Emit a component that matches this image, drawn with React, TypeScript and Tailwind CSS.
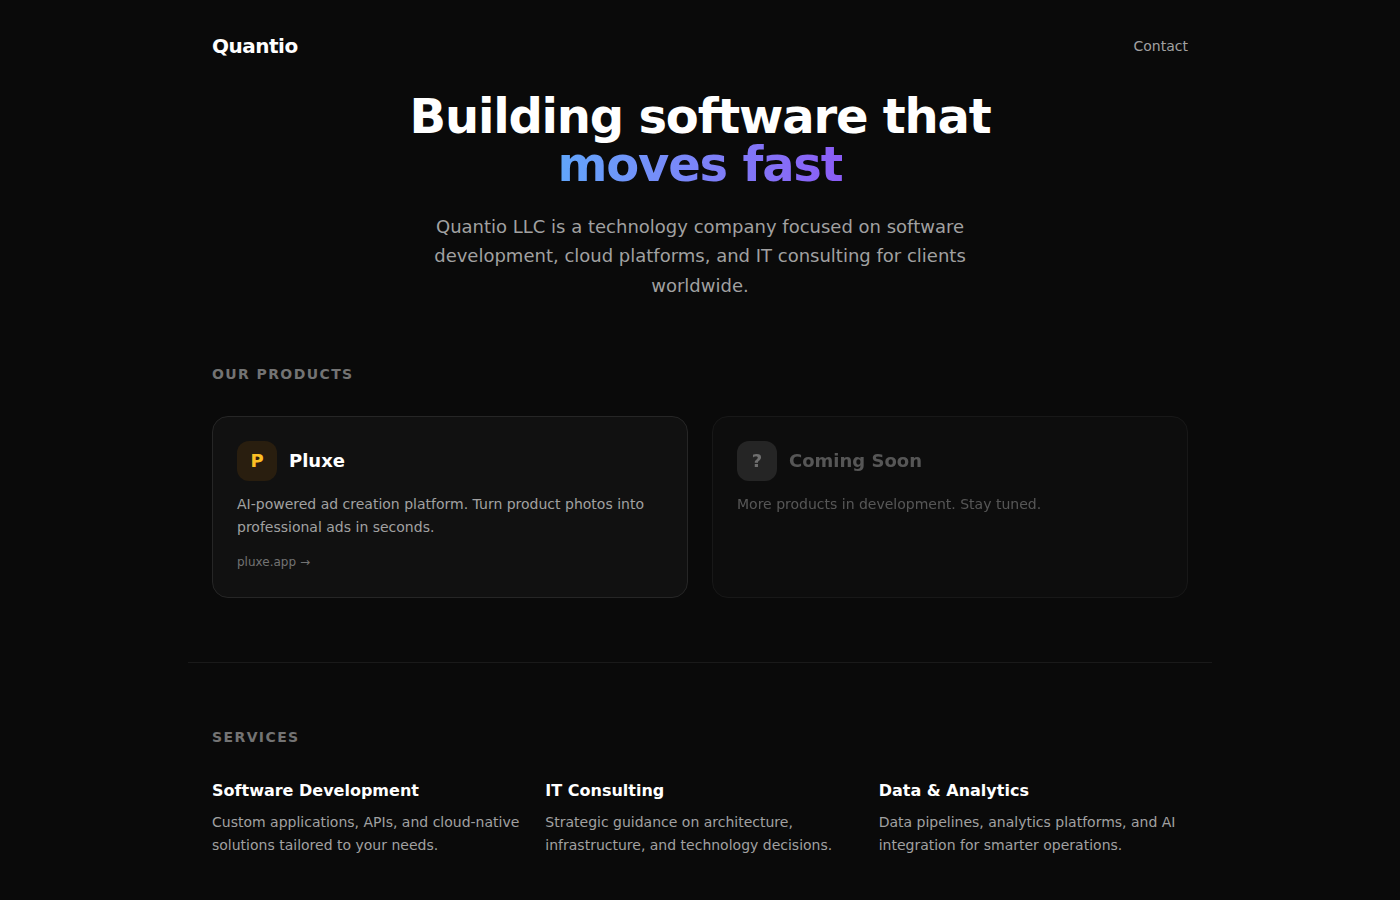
const products = [
  {
    name: "Pluxe",
    initial: "P",
    description:
      "AI-powered ad creation platform. Turn product photos into professional ads in seconds.",
    link: "pluxe.app",
  },
];

const services = [
  {
    title: "Software Development",
    description: "Custom applications, APIs, and cloud-native solutions tailored to your needs.",
  },
  {
    title: "IT Consulting",
    description: "Strategic guidance on architecture, infrastructure, and technology decisions.",
  },
  {
    title: "Data & Analytics",
    description: "Data pipelines, analytics platforms, and AI integration for smarter operations.",
  },
];

function SectionTitle({ children }: { children: string }) {
  return (
    <h2 className="mb-8 text-sm font-semibold tracking-widest text-[#737373] uppercase">
      {children}
    </h2>
  );
}

export default function App() {
  return (
    <div className="min-h-screen bg-[#0a0a0a] font-['DejaVu_Sans',sans-serif] text-[#ededed]">
      <div className="mx-auto max-w-5xl">
        <header className="flex items-center justify-between px-6 py-8">
          <span className="text-xl font-bold tracking-tight text-white">Quantio</span>
          <a href="#contact" className="text-sm text-[#a1a1a1] hover:text-white">
            Contact
          </a>
        </header>

        <section className="px-6 pb-16 text-center">
          <h1 className="mb-6 text-5xl font-bold tracking-tight text-white">
            Building software that
            <br />
            <span className="bg-linear-to-r from-[#60a5fa] to-[#8b5cf6] bg-clip-text text-transparent">
              moves fast
            </span>
          </h1>
          <p className="mx-auto max-w-xl text-lg leading-relaxed text-[#a1a1a1]">
            Quantio LLC is a technology company focused on software development, cloud platforms,
            and IT consulting for clients worldwide.
          </p>
        </section>

        <section className="px-6 pb-16">
          <SectionTitle>Our Products</SectionTitle>
          <div className="grid gap-6 md:grid-cols-2">
            {products.map((product) => (
              <a
                key={product.name}
                href="#pluxe"
                className="block rounded-2xl border border-[#262626] bg-[#111] p-6"
              >
                <div className="mb-3 flex items-center gap-3">
                  <div className="flex size-10 items-center justify-center rounded-xl bg-[#291e0f] text-lg font-bold text-[#fbbf24]">
                    {product.initial}
                  </div>
                  <h3 className="text-lg font-semibold text-white">{product.name}</h3>
                </div>
                <p className="text-sm leading-relaxed text-[#a1a1a1]">{product.description}</p>
                <span className="mt-4 inline-block text-xs text-[#737373]">{product.link} →</span>
              </a>
            ))}
            <div className="rounded-2xl border border-[#262626] bg-[#111] p-6 opacity-50">
              <div className="mb-3 flex items-center gap-3">
                <div className="flex size-10 items-center justify-center rounded-xl bg-[#404040] text-lg font-bold text-[#d4d4d4]">
                  ?
                </div>
                <h3 className="text-lg font-semibold text-[#a1a1a1]">Coming Soon</h3>
              </div>
              <p className="text-sm leading-relaxed text-[#a1a1a1]">
                More products in development. Stay tuned.
              </p>
            </div>
          </div>
        </section>

        <section className="border-t border-[#1a1a1a] px-6 py-16">
          <SectionTitle>Services</SectionTitle>
          <div className="grid gap-6 md:grid-cols-3">
            {services.map((service) => (
              <div key={service.title}>
                <h3 className="mb-2 font-semibold text-white">{service.title}</h3>
                <p className="text-sm leading-relaxed text-[#a1a1a1]">{service.description}</p>
              </div>
            ))}
          </div>
        </section>
      </div>
    </div>
  );
}
